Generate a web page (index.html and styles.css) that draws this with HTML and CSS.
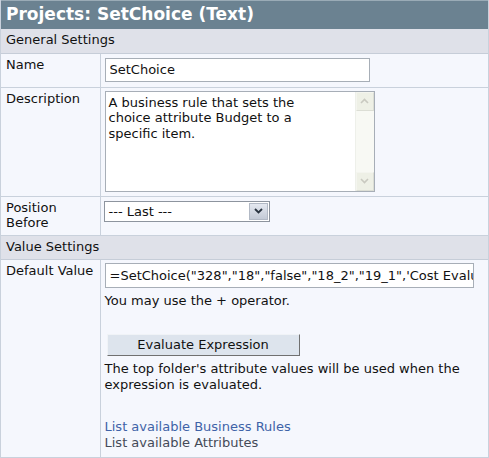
FILE: index.html
```html
<!DOCTYPE html>
<html>
<head>
<meta charset="utf-8">
<link rel="stylesheet" href="styles.css">
</head>
<body>
<div class="panel">
  <div class="title">Projects: SetChoice (Text)</div>
  <table class="form">
    <tr class="section"><td colspan="2">General Settings</td></tr>
    <tr class="row-name">
      <td class="label">Name</td>
      <td class="value"><input class="textbox name-box" type="text" value="SetChoice"></td>
    </tr>
    <tr class="row-desc">
      <td class="label">Description</td>
      <td class="value">
        <div class="textarea">
          <div class="ta-text">A business rule that sets the choice attribute Budget to a specific item.</div>
          <div class="scrollbar">
            <div class="sb-btn"><svg width="9" height="6" viewBox="0 0 9 6"><path d="M1 5 L4.5 1.5 L8 5" fill="none" stroke="#c9c9c0" stroke-width="1.6"/></svg></div>
            <div class="sb-track"></div>
            <div class="sb-btn"><svg width="9" height="6" viewBox="0 0 9 6"><path d="M1 1 L4.5 4.5 L8 1" fill="none" stroke="#c9c9c0" stroke-width="1.6"/></svg></div>
          </div>
        </div>
      </td>
    </tr>
    <tr class="row-pos">
      <td class="label">Position<br>Before</td>
      <td class="value">
        <div class="select">
          <span class="sel-text">--- Last ---</span>
          <span class="sel-btn"><svg width="9" height="6" viewBox="0 0 9 6"><path d="M1 1 L4.5 4.5 L8 1" fill="none" stroke="#2a3440" stroke-width="1.8"/></svg></span>
        </div>
      </td>
    </tr>
    <tr class="section"><td colspan="2">Value Settings</td></tr>
    <tr class="row-default">
      <td class="label">Default Value</td>
      <td class="value">
        <input class="textbox expr-box" type="text" value="=SetChoice(&quot;328&quot;,&quot;18&quot;,&quot;false&quot;,&quot;18_2&quot;,&quot;19_1&quot;,'Cost Evaluation')">
        <p class="note first">You may use the + operator.</p>
        <div class="button">Evaluate Expression</div>
        <p class="note">The top folder's attribute values will be used when the expression is evaluated.</p>
        <div class="links">
          <a class="link" href="#">List available Business Rules</a>
          <a class="link visited" href="#">List available Attributes</a>
        </div>
      </td>
    </tr>
  </table>
</div>
</body>
</html>
```

FILE: styles.css
```css
* { box-sizing: border-box; }
html, body { margin: 0; padding: 0; background: #ffffff; }
body {
  font-family: "DejaVu Sans", Verdana, sans-serif;
  font-size: 13px;
  color: #111;
}
.panel {
  width: 489px;
  height: 458px;
  border-left: 1px solid #c9d1dc;
  border-right: 1px solid #c9d1dc;
  background: #f5f7fd;
}
.title {
  height: 29px;
  background: #6b8291;
  border-top: 1px solid #9aabb6;
  color: #ffffff;
  font-weight: bold;
  font-size: 17px;
  line-height: 26px;
  padding-left: 5px;
  white-space: nowrap;
}
.form {
  width: 100%;
  border-collapse: collapse;
}
.form td {
  padding: 0;
  vertical-align: top;
}
.section td {
  height: 24px;
  background: #dfe1e9;
  border-bottom: 1px solid #c6cdd8;
  padding-left: 5px;
  line-height: 22px;
}
.label {
  width: 99px;
  border-right: 1px solid #c9d1dc;
  border-bottom: 1px solid #c9d1dc;
  padding: 3px 0 0 5px !important;
  line-height: 16px;
}
.row-pos .label { padding-top: 3px !important; line-height: 15px; }
.value {
  border-bottom: 1px solid #c9d1dc;
  padding: 4px 0 0 4px !important;
}
.row-name td { height: 34px; }
.row-desc td { height: 109px; }
.row-pos td { height: 39px; }
.row-default td { height: 198px; }
.row-desc .value { padding-top: 3px !important; }

.textbox {
  display: block;
  margin: 0;
  height: 24px;
  border: 1px solid #a7aeb7;
  background: #ffffff;
  padding: 0 0 0 4px;
  font-family: inherit;
  font-size: 13px;
  color: #111;
  outline: none;
}
.name-box { width: 265px; }
.expr-box { width: 369px; height: 25px; margin-top: -1px; }

.textarea {
  width: 270px;
  height: 101px;
  border: 1px solid #a7aeb7;
  background: #ffffff;
  display: flex;
}
.ta-text {
  flex: 1;
  padding: 3px 48px 0 3px;
  line-height: 15.5px;
}
.scrollbar {
  width: 19px;
  display: flex;
  flex-direction: column;
  background: #f8f9f4;
  border-left: 1px solid #eef0ea;
}
.sb-btn {
  height: 19px;
  background: #eef0e6;
  border: 1px solid #f4f5ef;
  border-right-color: #dcded5;
  border-bottom-color: #dcded5;
  display: flex;
  align-items: center;
  justify-content: center;
}
.sb-track { flex: 1; }

.select {
  margin-left: -1px;
  width: 166px;
  height: 21px;
  border: 1px solid #8d949e;
  background: #ffffff;
  display: flex;
  align-items: stretch;
}
.sel-text {
  flex: 1;
  padding-left: 4px;
  line-height: 19px;
}
.sel-btn {
  width: 19px;
  margin: 1px 1px 1px 0;
  background: linear-gradient(#e4e8f0, #c3cad6);
  border: 1px solid #b2b9c5;
  display: flex;
  align-items: center;
  justify-content: center;
}

.note {
  margin: 0;
  line-height: 16px;
}
.note.first { margin-top: 5px; }
.button {
  width: 193px;
  height: 22px;
  margin: 25px 0 5px 2px;
  background: #dde4ed;
  border: 1px solid #f0f3f7;
  border-right-color: #707070;
  border-bottom-color: #707070;
  text-align: center;
  line-height: 19px;
}
.links {
  margin-top: 26px;
  display: flex;
  flex-direction: column;
  line-height: 16px;
}
.link {
  color: #3f63a8;
  text-decoration: none;
}
.link.visited { color: #444a58; }
```
